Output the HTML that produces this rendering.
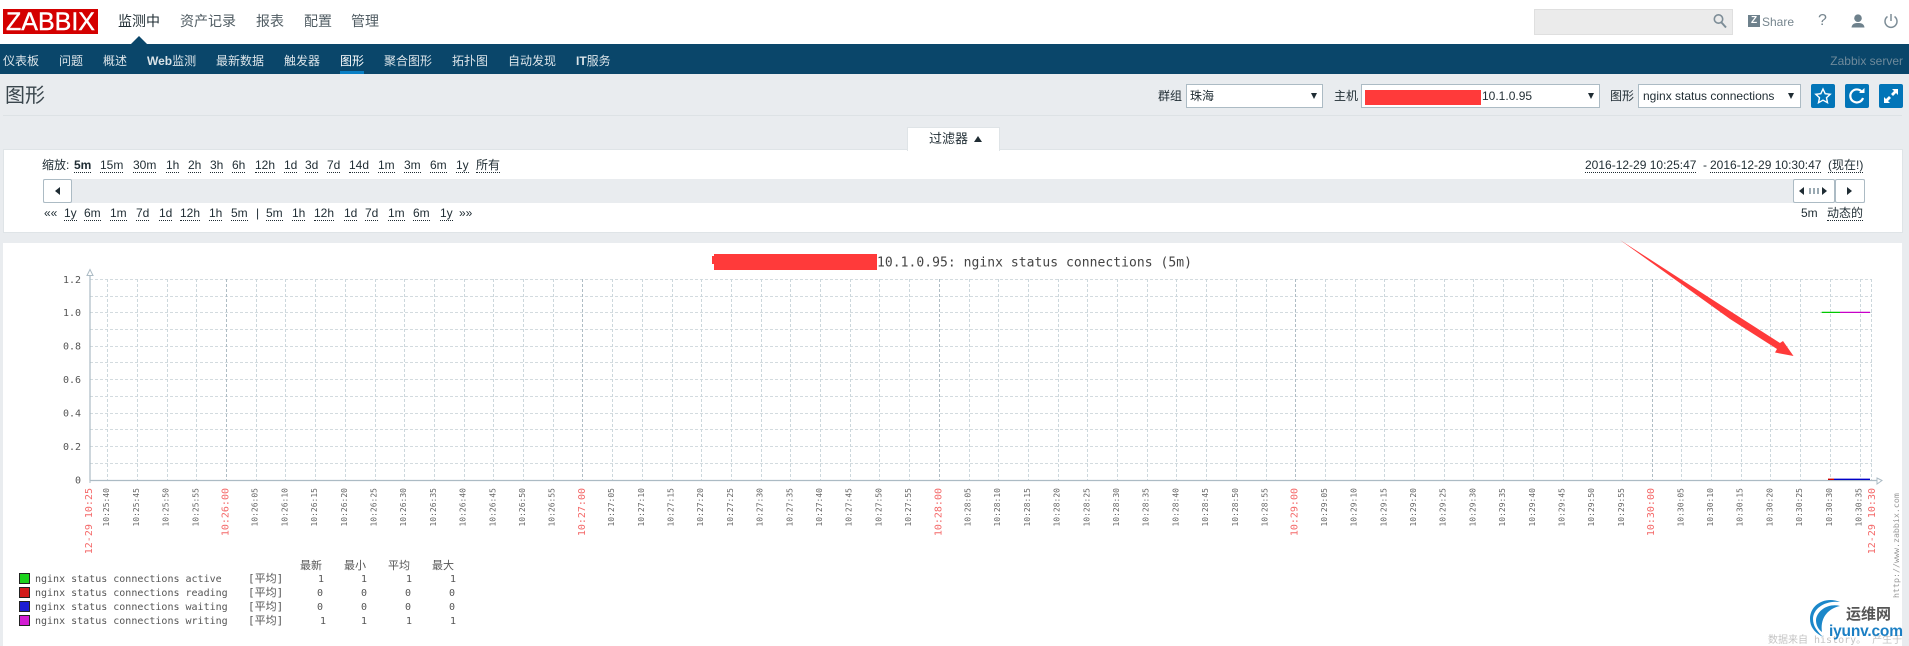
<!DOCTYPE html>
<html lang="zh"><head><meta charset="utf-8"><title>图形</title>
<style>
html,body{margin:0;padding:0}
body{width:1909px;height:646px;position:relative;overflow:hidden;background:#e9ecef;font-family:"Liberation Sans","Noto Sans CJK SC",sans-serif;font-size:12px;color:#1f2c33}
.a,.t{position:absolute}
.t{white-space:nowrap;line-height:16px}
.n{font-size:14px;line-height:20px;top:11px;color:#505c63}
.s{top:53px;color:#dbe4e9;line-height:16px}
.l{top:158px;border-bottom:1px dotted #1f2c33;line-height:14px}
.m{top:206px;border-bottom:1px dotted #1f2c33;line-height:14px}
.sel{position:absolute;top:84px;height:22px;background:#fff;border:1px solid #acbbc4}
.tri{position:absolute;width:0;height:0;border-left:3.5px solid transparent;border-right:3.5px solid transparent;border-top:6px solid #1f2c33;top:93px}
.b{position:absolute;top:84px;width:24px;height:24px;background:#0275b8;border-radius:2px}
.btn{position:absolute;top:179px;height:22px;background:#fff;border:1px solid #acbbc4;border-radius:2px}
svg text{font-family:"DejaVu Sans Mono","Noto Sans CJK SC",monospace}
.g text{font-size:8px;fill:#666}
.r text{font-size:10px;fill:#f46a6a}
.lg{font-size:10px;fill:#555}
.cj{font-size:11px}
</style></head><body>
<div class="a" style="left:0;top:0;width:1909px;height:44px;background:#fff"></div>
<div class="a" style="left:0;top:44px;width:1909px;height:30px;background:#0a466a"></div>
<div class="a" style="left:131px;top:36px;width:0;height:0;border-left:8px solid transparent;border-right:8px solid transparent;border-bottom:8px solid #0a466a"></div>
<div class="a" style="left:3px;top:9px;width:95px;height:25px;background:#d40000;color:#fff;font-size:25px;line-height:26px;text-align:center;-webkit-text-stroke:.4px #fff">ZABBIX</div>
<div class="t n" style="left:118px;color:#1f2c33">监测中</div>
<div class="t n" style="left:180px">资产记录</div>
<div class="t n" style="left:256px">报表</div>
<div class="t n" style="left:304px">配置</div>
<div class="t n" style="left:351px">管理</div>

<div class="a" style="left:1534px;top:9px;width:197px;height:24px;background:#ebebeb;border:1px solid #dfdfdf"></div>
<svg class="a" style="left:1712px;top:12px" width="16" height="18" viewBox="0 0 16 18"><circle cx="6.5" cy="7" r="4.2" fill="none" stroke="#7d8d97" stroke-width="1.6"/><path d="M9.5 10.5L14 15.5" stroke="#7d8d97" stroke-width="2"/></svg>
<div class="a" style="left:1748px;top:15px;width:12px;height:12px;background:#6e818c;color:#fff;font-size:10px;font-weight:bold;line-height:12px;text-align:center">Z</div>
<div class="t" style="left:1762px;top:14px;color:#76858e">Share</div>
<div class="t" style="left:1818px;top:13px;color:#76858e;font-size:16px">?</div>
<svg class="a" style="left:1850px;top:13px" width="16" height="16" viewBox="0 0 16 16"><circle cx="8" cy="5.2" r="3.8" fill="#6e818c"/><path d="M1.5 14.5C2 10.5 5 10 8 10s6 .5 6.500 4.500z" fill="#6e818c"/></svg>
<svg class="a" style="left:1883px;top:13px" width="16" height="16" viewBox="0 0 16 16"><path d="M4.500 3.500A6 6 0 1 0 11.500 3.500" fill="none" stroke="#7d8d97" stroke-width="1.500"/><path d="M8 1v7" stroke="#7d8d97" stroke-width="1.500"/></svg>

<div class="t s" style="left:3px">仪表板</div>
<div class="t s" style="left:59px">问题</div>
<div class="t s" style="left:103px">概述</div>
<div class="t s" style="left:147px"><b>Web</b>监测</div>
<div class="t s" style="left:216px">最新数据</div>
<div class="t s" style="left:284px">触发器</div>
<div class="t s" style="left:340px;color:#fff">图形</div>
<div class="a" style="left:340px;top:71px;width:24px;height:3px;background:#0a7fc4"></div>
<div class="t s" style="left:384px">聚合图形</div>
<div class="t s" style="left:452px">拓扑图</div>
<div class="t s" style="left:508px">自动发现</div>
<div class="t s" style="left:576px"><b>IT</b>服务</div>
<div class="t" style="right:6px;top:53px;color:#6f8a9b">Zabbix server</div>

<div class="t" style="left:5px;top:84px;font-size:20px;line-height:24px;color:#3a464d">图形</div>
<div class="a" style="left:3px;top:115px;width:1899px;height:1px;background:#dde2e5"></div>

<div class="t" style="left:1158px;top:88px">群组</div>
<div class="sel" style="left:1186px;width:135px"></div>
<div class="t" style="left:1190px;top:88px">珠海</div>
<div class="tri" style="left:1311px"></div>
<div class="t" style="left:1334px;top:88px">主机</div>
<div class="sel" style="left:1361px;width:237px"></div>
<div class="a" style="left:1365px;top:90px;width:116px;height:15px;background:#ff3a3a"></div>
<div class="t" style="left:1482px;top:88px">10.1.0.95</div>
<div class="tri" style="left:1588px"></div>
<div class="t" style="left:1610px;top:88px">图形</div>
<div class="sel" style="left:1638px;width:161px"></div>
<div class="t" style="left:1643px;top:88px">nginx status connections</div>
<div class="tri" style="left:1788px"></div>
<div class="b" style="left:1811px"><svg width="24" height="24" viewBox="0 0 24 24"><path d="M12 5l2.200 4.700 5 .6-3.700 3.400 1 5L12 16.200 7.500 18.700l1-5L4.800 10.300l5-.6z" fill="none" stroke="#fff" stroke-width="1.400"/></svg></div>
<div class="b" style="left:1845px"><svg width="24" height="24" viewBox="0 0 24 24"><path d="M17 8A6.500 6.500 0 1 0 18 14" fill="none" stroke="#fff" stroke-width="2.200"/><path d="M14 9h5.500V4z" fill="#fff"/></svg></div>
<div class="b" style="left:1879px"><svg width="24" height="24" viewBox="0 0 24 24"><path d="M13 5h6v6l-2-2-3 3-2-2 3-3zM11 19H5v-6l2 2 3-3 2 2-3 3z" fill="#fff"/></svg></div>

<div class="a" style="left:3px;top:149px;width:1898px;height:82px;background:#fff;border:1px solid #dfe4e7"></div>
<div class="a" style="left:907px;top:127px;width:91px;height:23px;background:#fff;border:1px solid #dfe4e7;border-bottom:0"></div>
<div class="t" style="left:929px;top:131px;font-size:13px">过滤器</div>
<div class="a" style="left:974px;top:136px;width:0;height:0;border-left:4px solid transparent;border-right:4px solid transparent;border-bottom:6px solid #1f2c33"></div>

<div class="t" style="left:42px;top:158px;line-height:14px">缩放:</div>
<div class="t l" style="left:74px"><b>5m</b></div>
<div class="t l" style="left:100px">15m</div>
<div class="t l" style="left:133px">30m</div>
<div class="t l" style="left:166px">1h</div>
<div class="t l" style="left:188px">2h</div>
<div class="t l" style="left:210px">3h</div>
<div class="t l" style="left:232px">6h</div>
<div class="t l" style="left:255px">12h</div>
<div class="t l" style="left:284px">1d</div>
<div class="t l" style="left:305px">3d</div>
<div class="t l" style="left:327px">7d</div>
<div class="t l" style="left:349px">14d</div>
<div class="t l" style="left:378px">1m</div>
<div class="t l" style="left:404px">3m</div>
<div class="t l" style="left:430px">6m</div>
<div class="t l" style="left:456px">1y</div>
<div class="t l" style="left:476px">所有</div>
<div class="t l" style="left:1585px">2016-12-29 10:25:47</div>
<div class="t" style="left:1703px;top:158px;line-height:14px">-</div>
<div class="t l" style="left:1710px">2016-12-29 10:30:47</div>
<div class="t l" style="left:1828px">(现在!)</div>

<div class="a" style="left:43px;top:179px;width:1822px;height:24px;background:#e9ecef"></div>
<div class="btn" style="left:43px;width:27px"></div>
<div class="a" style="left:55px;top:187px;width:0;height:0;border-top:4px solid transparent;border-bottom:4px solid transparent;border-right:5px solid #1f2c33"></div>
<div class="btn" style="left:1793px;width:40px"></div>
<div class="a" style="left:1799px;top:187px;width:0;height:0;border-top:4px solid transparent;border-bottom:4px solid transparent;border-right:5px solid #1f2c33"></div>
<div class="a" style="left:1809px;top:188px;width:11px;height:6px;background:repeating-linear-gradient(90deg,#9aa9b2 0 2px,transparent 2px 4px)"></div>
<div class="a" style="left:1822px;top:187px;width:0;height:0;border-top:4px solid transparent;border-bottom:4px solid transparent;border-left:5px solid #1f2c33"></div>
<div class="btn" style="left:1835px;width:28px"></div>
<div class="a" style="left:1847px;top:187px;width:0;height:0;border-top:4px solid transparent;border-bottom:4px solid transparent;border-left:5px solid #1f2c33"></div>

<div class="t" style="left:44px;top:206px;line-height:14px">««</div>
<div class="t m" style="left:64px">1y</div>
<div class="t m" style="left:84px">6m</div>
<div class="t m" style="left:110px">1m</div>
<div class="t m" style="left:136px">7d</div>
<div class="t m" style="left:159px">1d</div>
<div class="t m" style="left:180px">12h</div>
<div class="t m" style="left:209px">1h</div>
<div class="t m" style="left:231px">5m</div>
<div class="t" style="left:256px;top:206px;line-height:14px">|</div>
<div class="t m" style="left:266px">5m</div>
<div class="t m" style="left:292px">1h</div>
<div class="t m" style="left:314px">12h</div>
<div class="t m" style="left:344px">1d</div>
<div class="t m" style="left:365px">7d</div>
<div class="t m" style="left:388px">1m</div>
<div class="t m" style="left:413px">6m</div>
<div class="t m" style="left:440px">1y</div>
<div class="t" style="left:459px;top:206px;line-height:14px">»»</div>
<div class="t" style="left:1801px;top:206px;line-height:14px">5m</div>
<div class="t m" style="left:1827px">动态的</div>

<div class="a" style="left:3px;top:243px;width:1899px;height:403px;background:#fff"></div>
<svg class="a" style="left:0;top:0" width="1909" height="646" viewBox="0 0 1909 646">
<path shape-rendering="crispEdges" d="M90 279.500H1872M90 296.500H1872M90 312.500H1872M90 329.500H1872M90 346.500H1872M90 362.500H1872M90 379.500H1872M90 396.500H1872M90 413.500H1872M90 429.500H1872M90 446.500H1872M90 463.500H1872" stroke="#d3dbdf" stroke-dasharray="3 2" fill="none"/>
<path shape-rendering="crispEdges" d="M107.500 279V480M137.500 279V480M167.500 279V480M196.500 279V480M256.500 279V480M285.500 279V480M315.500 279V480M345.500 279V480M375.500 279V480M404.500 279V480M434.500 279V480M464.500 279V480M493.500 279V480M523.500 279V480M553.500 279V480M612.500 279V480M642.500 279V480M672.500 279V480M701.500 279V480M731.500 279V480M761.500 279V480M790.500 279V480M820.500 279V480M850.500 279V480M879.500 279V480M909.500 279V480M969.500 279V480M998.500 279V480M1028.500 279V480M1058.500 279V480M1087.500 279V480M1117.500 279V480M1147.500 279V480M1176.500 279V480M1206.500 279V480M1236.500 279V480M1266.500 279V480M1325.500 279V480M1355.500 279V480M1384.500 279V480M1414.500 279V480M1444.500 279V480M1473.500 279V480M1503.500 279V480M1533.500 279V480M1563.500 279V480M1592.500 279V480M1622.500 279V480M1681.500 279V480M1711.500 279V480M1741.500 279V480M1770.500 279V480M1800.500 279V480M1830.500 279V480M1860.500 279V480M1871.500 279V480" stroke="#ccd7dc" stroke-dasharray="3 2" fill="none"/>
<path shape-rendering="crispEdges" d="M226.500 279V480M582.500 279V480M939.500 279V480M1295.500 279V480M1652.500 279V480" stroke="#aebcc4" stroke-dasharray="3 2" fill="none"/>
<path d="M90 275V480.500M90 480.500H1877" stroke="#acbbc4" stroke-width="1.200" fill="none"/>
<path d="M87 275.500L90 269.500L93 275.500z" fill="#fff" stroke="#acbbc4"/>
<path d="M1877 478L1882 480.500L1877 484z" fill="#fff" stroke="#acbbc4"/>
<path d="M90 480v3" stroke="#acbbc4"/>

<path d="M1821.700 312.400H1840" stroke="#00c800" stroke-width="1.200"/>
<path d="M1840 312.400H1870" stroke="#c800c8" stroke-width="1.200"/>
<path d="M1828 479.300H1834" stroke="#c80000" stroke-width="1.400"/>
<path d="M1834 479.300H1870" stroke="#0000c8" stroke-width="1.400"/>

<rect x="714" y="254" width="163" height="16" fill="#ff3a3a"/><rect x="712" y="256" width="3" height="8" fill="#ff3a3a"/>
<text x="877" y="266.500" font-size="13" fill="#444" textLength="315">10.1.0.95: nginx status connections (5m)</text>

<g font-size="10" fill="#555" text-anchor="end">
<text x="81" y="283">1.2</text><text x="81" y="316">1.0</text><text x="81" y="349.500">0.8</text><text x="81" y="383">0.6</text><text x="81" y="416.500">0.4</text><text x="81" y="450">0.2</text><text x="81" y="483.500">0</text>
</g>

<g class="r" text-anchor="end">
<text transform="translate(92,488) rotate(-90)">12-29 10:25</text>
<text transform="translate(228.500,488) rotate(-90)">10:26:00</text>
<text transform="translate(585,488) rotate(-90)">10:27:00</text>
<text transform="translate(941.300,488) rotate(-90)">10:28:00</text>
<text transform="translate(1297.700,488) rotate(-90)">10:29:00</text>
<text transform="translate(1654,488) rotate(-90)">10:30:00</text>
<text transform="translate(1875,488) rotate(-90)">12-29 10:30</text>
</g>
<g class="g" text-anchor="end">
<text transform="translate(109.200,488) rotate(-90)">10:25:40</text>
<text transform="translate(138.900,488) rotate(-90)">10:25:45</text>
<text transform="translate(168.600,488) rotate(-90)">10:25:50</text>
<text transform="translate(198.300,488) rotate(-90)">10:25:55</text>
<text transform="translate(257.700,488) rotate(-90)">10:26:05</text>
<text transform="translate(287.400,488) rotate(-90)">10:26:10</text>
<text transform="translate(317.100,488) rotate(-90)">10:26:15</text>
<text transform="translate(346.800,488) rotate(-90)">10:26:20</text>
<text transform="translate(376.500,488) rotate(-90)">10:26:25</text>
<text transform="translate(406.200,488) rotate(-90)">10:26:30</text>
<text transform="translate(435.900,488) rotate(-90)">10:26:35</text>
<text transform="translate(465.600,488) rotate(-90)">10:26:40</text>
<text transform="translate(495.300,488) rotate(-90)">10:26:45</text>
<text transform="translate(525,488) rotate(-90)">10:26:50</text>
<text transform="translate(554.700,488) rotate(-90)">10:26:55</text>
<text transform="translate(614.100,488) rotate(-90)">10:27:05</text>
<text transform="translate(643.800,488) rotate(-90)">10:27:10</text>
<text transform="translate(673.500,488) rotate(-90)">10:27:15</text>
<text transform="translate(703.200,488) rotate(-90)">10:27:20</text>
<text transform="translate(732.900,488) rotate(-90)">10:27:25</text>
<text transform="translate(762.600,488) rotate(-90)">10:27:30</text>
<text transform="translate(792.300,488) rotate(-90)">10:27:35</text>
<text transform="translate(822,488) rotate(-90)">10:27:40</text>
<text transform="translate(851.700,488) rotate(-90)">10:27:45</text>
<text transform="translate(881.400,488) rotate(-90)">10:27:50</text>
<text transform="translate(911.100,488) rotate(-90)">10:27:55</text>
<text transform="translate(970.500,488) rotate(-90)">10:28:05</text>
<text transform="translate(1000.200,488) rotate(-90)">10:28:10</text>
<text transform="translate(1029.900,488) rotate(-90)">10:28:15</text>
<text transform="translate(1059.600,488) rotate(-90)">10:28:20</text>
<text transform="translate(1089.300,488) rotate(-90)">10:28:25</text>
<text transform="translate(1119,488) rotate(-90)">10:28:30</text>
<text transform="translate(1148.700,488) rotate(-90)">10:28:35</text>
<text transform="translate(1178.400,488) rotate(-90)">10:28:40</text>
<text transform="translate(1208.100,488) rotate(-90)">10:28:45</text>
<text transform="translate(1237.800,488) rotate(-90)">10:28:50</text>
<text transform="translate(1267.500,488) rotate(-90)">10:28:55</text>
<text transform="translate(1326.900,488) rotate(-90)">10:29:05</text>
<text transform="translate(1356.600,488) rotate(-90)">10:29:10</text>
<text transform="translate(1386.300,488) rotate(-90)">10:29:15</text>
<text transform="translate(1416,488) rotate(-90)">10:29:20</text>
<text transform="translate(1445.700,488) rotate(-90)">10:29:25</text>
<text transform="translate(1475.400,488) rotate(-90)">10:29:30</text>
<text transform="translate(1505.100,488) rotate(-90)">10:29:35</text>
<text transform="translate(1534.800,488) rotate(-90)">10:29:40</text>
<text transform="translate(1564.500,488) rotate(-90)">10:29:45</text>
<text transform="translate(1594.200,488) rotate(-90)">10:29:50</text>
<text transform="translate(1623.900,488) rotate(-90)">10:29:55</text>
<text transform="translate(1683.300,488) rotate(-90)">10:30:05</text>
<text transform="translate(1713,488) rotate(-90)">10:30:10</text>
<text transform="translate(1742.700,488) rotate(-90)">10:30:15</text>
<text transform="translate(1772.400,488) rotate(-90)">10:30:20</text>
<text transform="translate(1802.100,488) rotate(-90)">10:30:25</text>
<text transform="translate(1831.800,488) rotate(-90)">10:30:30</text>
<text transform="translate(1861.500,488) rotate(-90)">10:30:35</text>
</g>

<g class="lg">
<text class="cj" x="300" y="569">最新</text><text class="cj" x="344" y="569">最小</text><text class="cj" x="388" y="569">平均</text><text class="cj" x="432" y="569">最大</text>
<rect x="19.500" y="573.500" width="10" height="10" fill="#1cd21c" stroke="#222"/>
<rect x="19.500" y="587.500" width="10" height="10" fill="#d21c1c" stroke="#222"/>
<rect x="19.500" y="601.500" width="10" height="10" fill="#1c1cd2" stroke="#222"/>
<rect x="19.500" y="615.500" width="10" height="10" fill="#d21cd2" stroke="#222"/>
<text x="35" y="582">nginx status connections active</text>
<text x="35" y="596">nginx status connections reading</text>
<text x="35" y="610">nginx status connections waiting</text>
<text x="35" y="624">nginx status connections writing</text>
<text class="cj" x="248" y="582">[平均]</text><text class="cj" x="248" y="596">[平均]</text><text class="cj" x="248" y="610">[平均]</text><text class="cj" x="248" y="624">[平均]</text>
<text x="318" y="582">1</text><text x="361" y="582">1</text><text x="406" y="582">1</text><text x="450" y="582">1</text>
<text x="317" y="596">0</text><text x="361" y="596">0</text><text x="405" y="596">0</text><text x="449" y="596">0</text>
<text x="317" y="610">0</text><text x="361" y="610">0</text><text x="405" y="610">0</text><text x="449" y="610">0</text>
<text x="320" y="624">1</text><text x="361" y="624">1</text><text x="406" y="624">1</text><text x="450" y="624">1</text>
</g>

<text transform="translate(1899,598) rotate(-90)" font-size="8.300" fill="#999">http://www.zabbix.com</text>
<text x="1768" y="643" font-size="10" fill="#c4c4c4">数据来自 history。 产生于 0.08 秒。</text>

<polygon points="1620,240 1730,311 1780,343 1783,341 1793.500,356 1775,352.500 1777,349 1730,319" fill="#ff3a3a"/>

<path d="M1840 602C1826 596 1810 604 1810 619C1810 627 1815 633 1823 637C1817 631 1813 626 1813 619C1813 608 1826 600 1840 602z" fill="#1b87c9"/>
<path d="M1840 606C1829 603 1817 610 1816 620C1816 625 1818 629 1822 632C1820 620 1826 609 1840 606z" fill="#1b87c9"/>
<text x="1846" y="619" font-size="15" font-weight="bold" fill="#555" style="font-family:'Noto Sans CJK SC',sans-serif">运维网</text>
<text x="1829" y="636" font-size="15.500" font-weight="bold" fill="#1b7fc4" style="font-family:'Liberation Sans',sans-serif" textLength="74">iyunv.com</text>
</svg>
</body></html>
